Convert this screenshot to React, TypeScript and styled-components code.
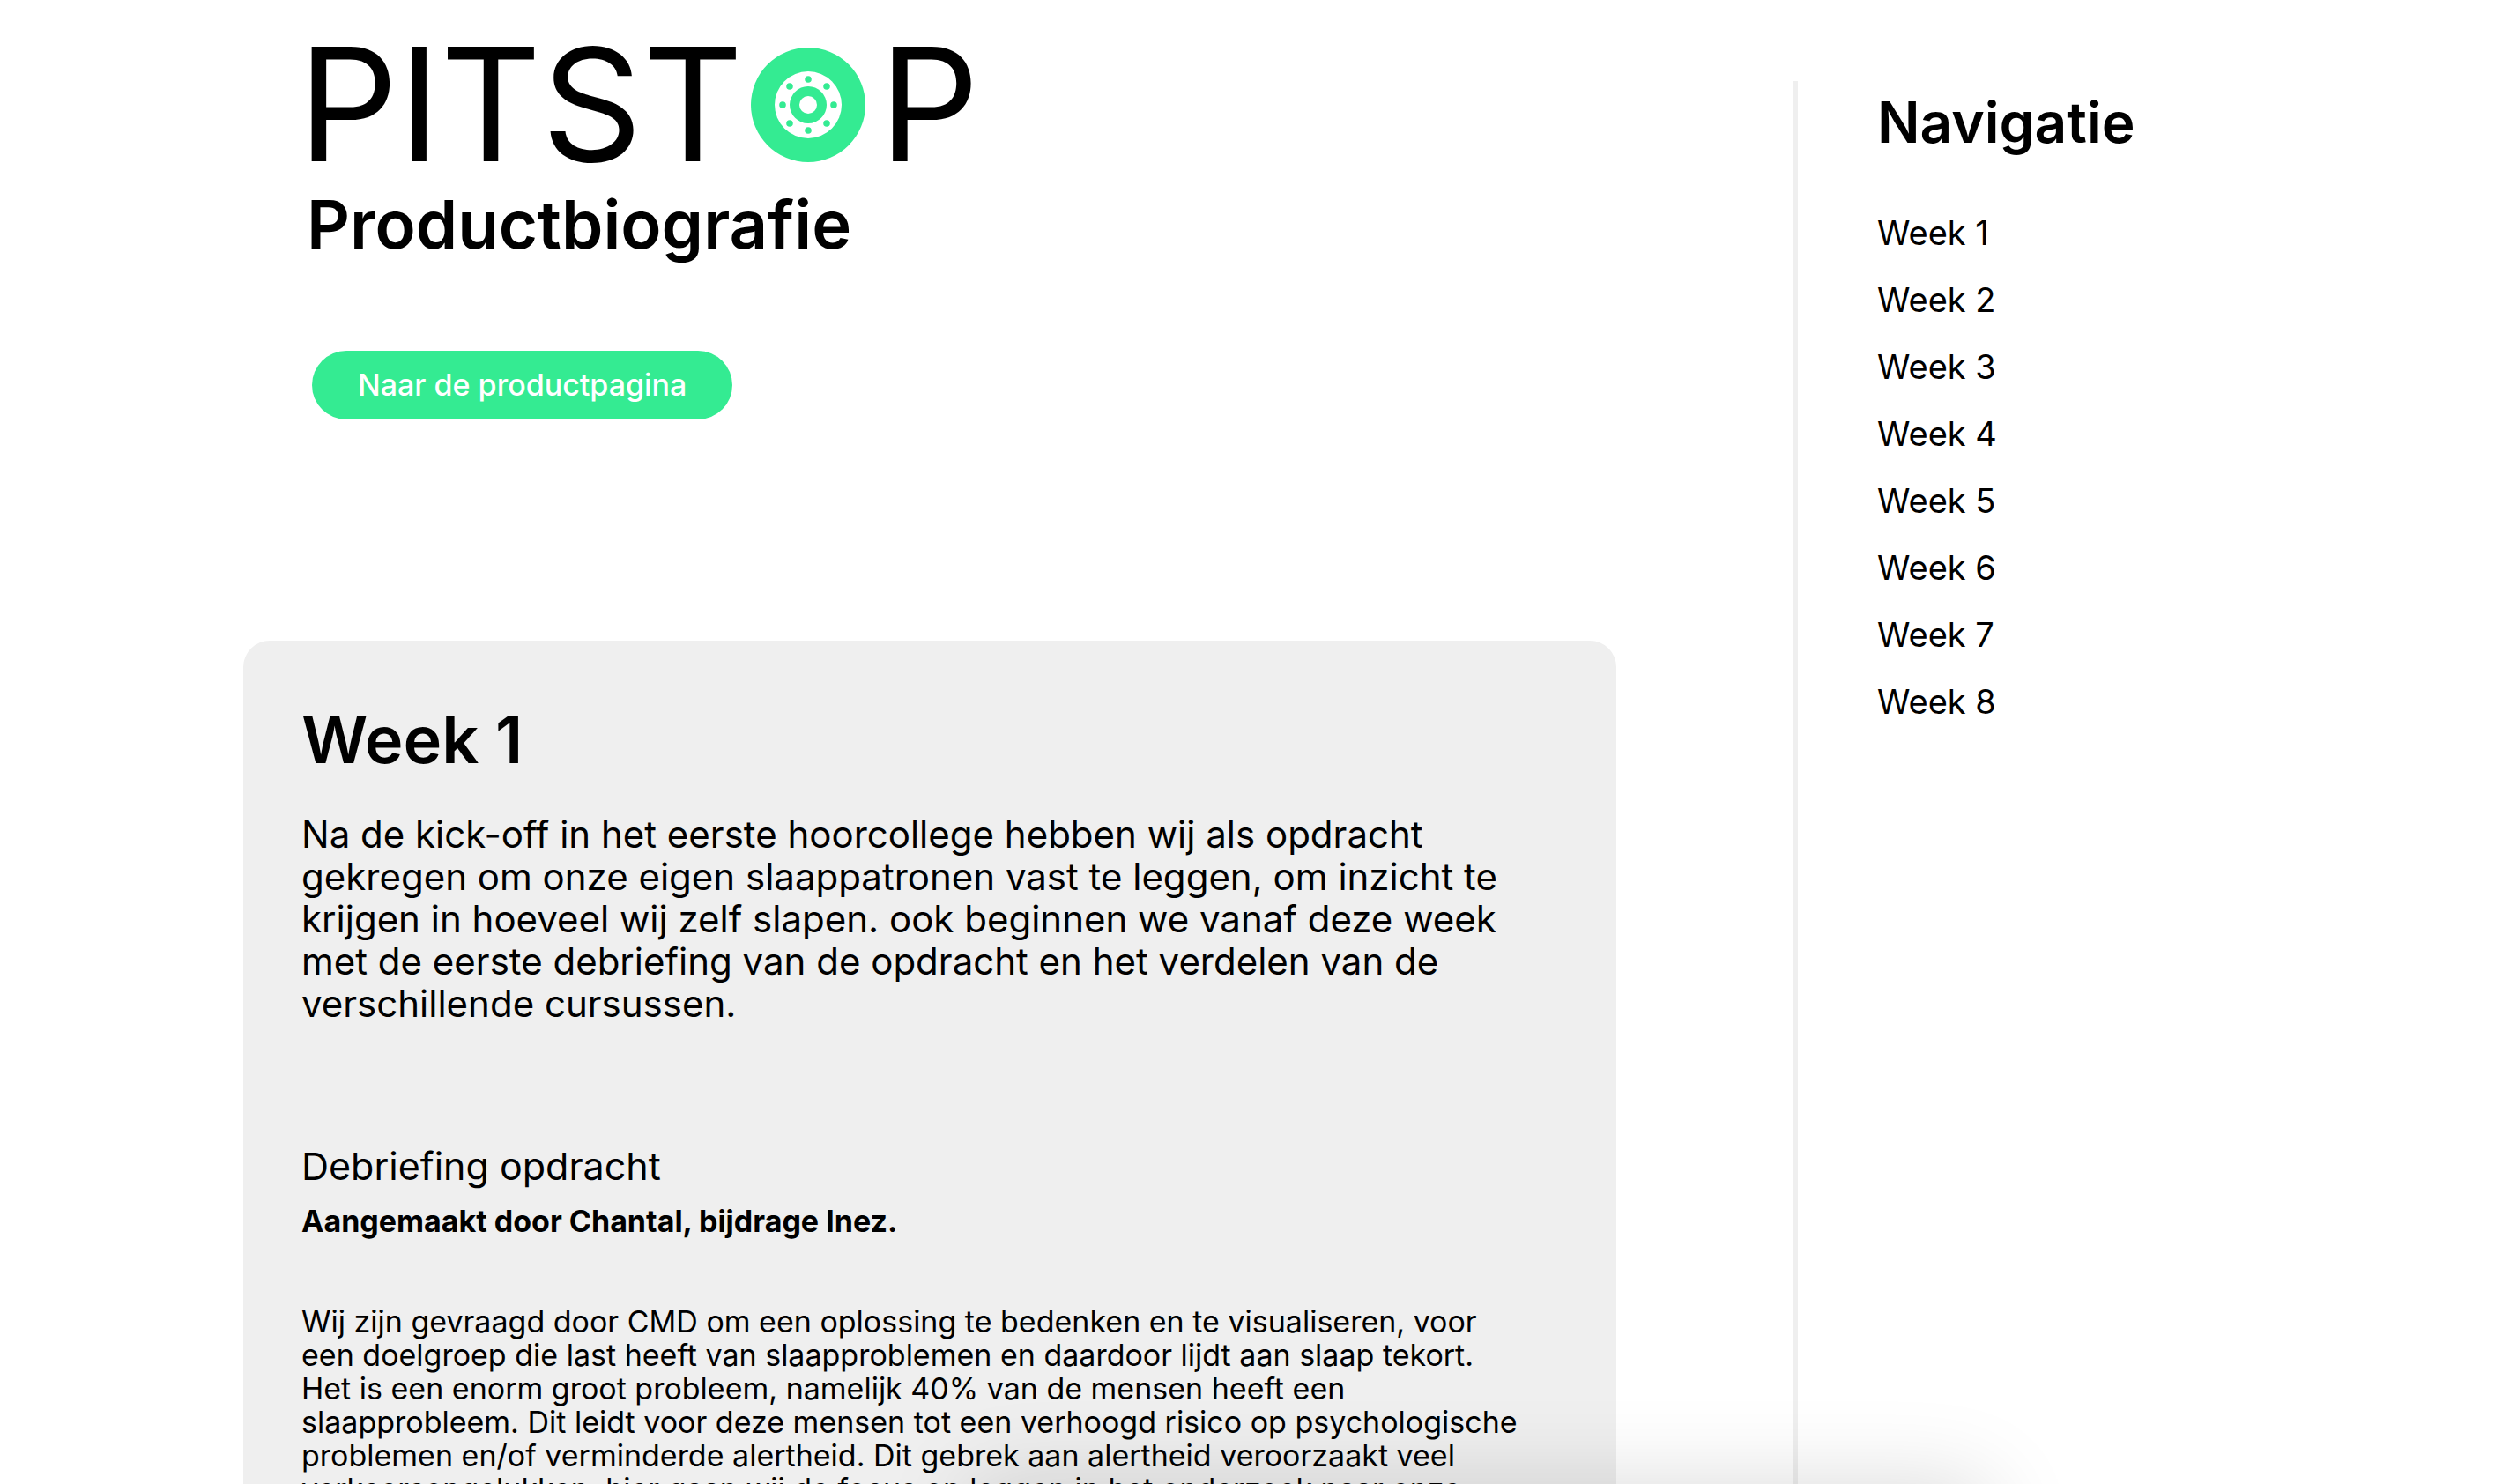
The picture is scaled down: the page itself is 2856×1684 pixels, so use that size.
import React from 'react';
import styled, { createGlobalStyle } from 'styled-components';

const GREEN = '#34eb92';
const GREY = '#efefef';

const GlobalStyle = createGlobalStyle`
  *, *::before, *::after { box-sizing: border-box; }
  body {
    margin: 0;
    background: #ffffff;
    color: #000000;
    font-family: Inter, "Liberation Sans", sans-serif;
  }
  h1, h2, h3, p, ul { margin: 0; padding: 0; }
`;

const Page = styled.div`
  display: grid;
  grid-template-columns: minmax(0, 1834fr) minmax(0, 822fr);
  column-gap: 7%;
  height: 100vh;
  overflow: hidden;
`;

const Main = styled.main`
  padding-left: 15.05%;
`;

const Hero = styled.header`
  display: flex;
  flex-direction: column;
  align-items: flex-start;
  height: 727px;
  padding: 30px 0 0 72px;
`;

const Logo = styled.div`
  display: flex;
  align-items: center;
  margin-left: -10px;
  font-size: 178px;
  line-height: 178px;
`;

const Wheel = styled.svg`
  width: 130px;
  height: 130px;
  margin: 0 16px 0 8px;
`;

const Subtitle = styled.h1`
  margin-top: 2px;
  font-size: 76px;
  font-weight: 600;
  line-height: 88px;
`;

const ProductButton = styled.button`
  margin: 100px 0 0 6px;
  padding: 0 52px;
  border: 0;
  border-radius: 39px;
  background: ${GREEN};
  color: #ffffff;
  font: 500 34px/78px Inter, "Liberation Sans", sans-serif;
  cursor: pointer;
`;

const Card = styled.article`
  padding: 64px 66px;
  border-radius: 30px;
  background: ${GREY};
`;

const CardTitle = styled.h2`
  font-size: 74px;
  font-weight: 600;
  line-height: 96px;
`;

const Intro = styled.p`
  margin-top: 36px;
  font-size: 42px;
  line-height: 48px;
`;

const SectionTitle = styled.h3`
  margin-top: 136px;
  font-size: 43px;
  font-weight: 400;
  line-height: 48px;
`;

const Author = styled.p`
  margin-top: 20px;
  font-size: 34px;
  font-weight: 700;
  line-height: 38px;
`;

const Body = styled.p`
  margin-top: 76px;
  font-size: 34px;
  line-height: 38px;
`;

const Line = styled.span`
  display: block;
  white-space: nowrap;
`;

const Sidebar = styled.nav`
  margin-top: 92px;
  padding: 10px 0 0 90px;
  border-left: 6px solid ${GREY};
`;

const NavTitle = styled.h2`
  font-size: 64px;
  font-weight: 600;
  line-height: 74px;
`;

const NavList = styled.ul`
  margin-top: 50px;
  list-style: none;
`;

const NavLink = styled.a`
  display: block;
  color: inherit;
  font-size: 38px;
  line-height: 76px;
  text-decoration: none;
`;

const BottomShadow = styled.div`
  position: fixed;
  top: 100%;
  left: 38.5%;
  right: 21%;
  height: 120px;
  border-radius: 20px;
  box-shadow: 0 0 100px rgba(0, 0, 0, 0.15);
  pointer-events: none;
`;

const intro = [
  'Na de kick-off in het eerste hoorcollege hebben wij als opdracht',
  'gekregen om onze eigen slaappatronen vast te leggen, om inzicht te',
  'krijgen in hoeveel wij zelf slapen. ook beginnen we vanaf deze week',
  'met de eerste debriefing van de opdracht en het verdelen van de',
  'verschillende cursussen.',
];

const body = [
  'Wij zijn gevraagd door CMD om een oplossing te bedenken en te visualiseren, voor',
  'een doelgroep die last heeft van slaapproblemen en daardoor lijdt aan slaap tekort.',
  'Het is een enorm groot probleem, namelijk 40% van de mensen heeft een',
  'slaapprobleem. Dit leidt voor deze mensen tot een verhoogd risico op psychologische',
  'problemen en/of verminderde alertheid. Dit gebrek aan alertheid veroorzaakt veel',
  'verkeersongelukken, hier gaan wij de focus op leggen in het onderzoek naar onze',
];

const weeks = [1, 2, 3, 4, 5, 6, 7, 8];

const bolts = [
  [65, 36], [86, 44], [94, 65], [86, 86], [65, 94], [44, 86], [36, 65], [44, 44],
];

export default function App() {
  return (
    <>
      <GlobalStyle />
      <Page>
        <Main>
          <Hero>
            <Logo>
              <span>PITST</span>
              <Wheel viewBox="0 0 130 130" role="img" aria-label="O">
                <circle cx="65" cy="65" r="65" fill={GREEN} />
                <circle cx="65" cy="65" r="38" fill="#fff" />
                <circle cx="65" cy="65" r="21" fill={GREEN} />
                <circle cx="65" cy="65" r="10" fill="#fff" />
                {bolts.map(([x, y]) => (
                  <circle key={`${x}-${y}`} cx={x} cy={y} r="3.8" fill={GREEN} />
                ))}
              </Wheel>
              <span>P</span>
            </Logo>
            <Subtitle>Productbiografie</Subtitle>
            <ProductButton type="button">Naar de productpagina</ProductButton>
          </Hero>
          <Card id="week-1">
            <CardTitle>Week 1</CardTitle>
            <Intro>{intro.map((t) => <Line key={t}>{t} </Line>)}</Intro>
            <SectionTitle>Debriefing opdracht</SectionTitle>
            <Author>Aangemaakt door Chantal, bijdrage Inez.</Author>
            <Body>{body.map((t) => <Line key={t}>{t} </Line>)}</Body>
          </Card>
        </Main>
        <Sidebar aria-label="Navigatie">
          <NavTitle>Navigatie</NavTitle>
          <NavList>
            {weeks.map((n) => (
              <li key={n}>
                <NavLink href={`#week-${n}`}>Week {n}</NavLink>
              </li>
            ))}
          </NavList>
        </Sidebar>
      </Page>
      <BottomShadow />
    </>
  );
}
